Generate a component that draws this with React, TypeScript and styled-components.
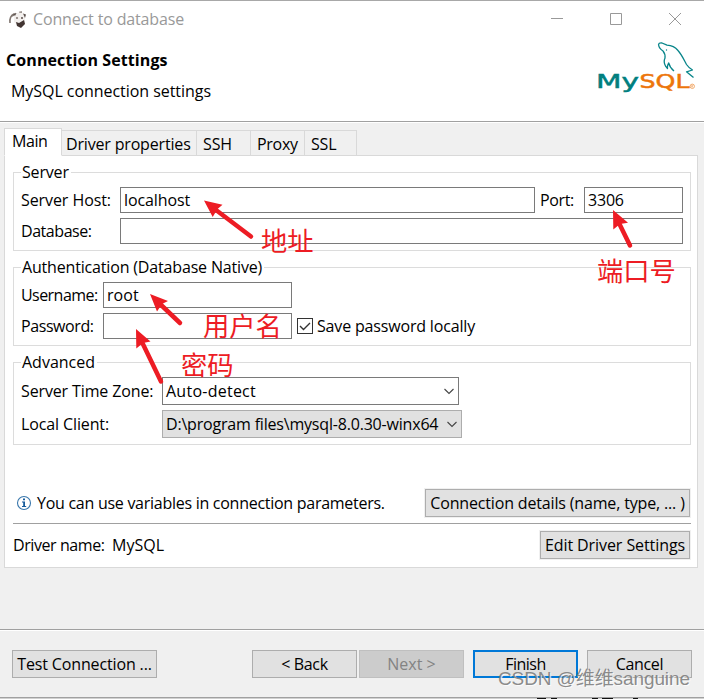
import React from "react";
import styled, { createGlobalStyle, css } from "styled-components";

const GlobalStyle = createGlobalStyle`
  * { box-sizing: border-box; }
  body {
    margin: 0;
    overflow: hidden;
    background: #f0f0f0;
    color: #000;
    font: 16px/22px "Open Sans", "Noto Sans", sans-serif;
  }
`;

const Dialog = styled.div`
  position: relative;
  display: flex;
  flex-direction: column;
  width: 704px;
  height: 699px;
  overflow: hidden;
  background: #f0f0f0;
  border-top: 1px solid #a8a8a8;
`;

const Text = styled.span<{ $ls?: number; $w?: number }>`
  flex: none;
  white-space: pre;
  letter-spacing: ${(p) => p.$ls ?? -0.17}px;
  ${(p) => p.$w && css`width: ${p.$w}px;`}
`;

/* Header */
const Header = styled.header`
  height: 122px;
  flex: none;
  background: #fff;
  border-bottom: 1px solid #fff;
  box-shadow: inset 0 -1px #a0a0a0;
`;

const TitleBar = styled.div`
  display: flex;
  align-items: center;
  height: 36px;
  padding: 0 22px 0 8px;
  color: #999;
`;

const TitleText = styled(Text)`
  margin-left: 6px;
  flex: 1;
`;

const WindowControls = styled.div`
  display: flex;
  gap: 45px;
`;

const HeaderBody = styled.div`
  display: flex;
  justify-content: space-between;
  align-items: flex-start;
  padding: 2px 6px 0;
`;

const Headings = styled.div`
  display: flex;
  flex-direction: column;
  gap: 9px;
  padding-top: 10px;
`;

const Heading = styled(Text)`
  font-weight: 700;
`;

const SubHeading = styled(Text)`
  padding-left: 5px;
`;

/* Tabs */
const TabStrip = styled.nav`
  display: flex;
  align-items: flex-end;
  height: 28px;
  margin: 5px 0 -1px 4px;
  position: relative;
`;

const Tab = styled.div<{ $w: number; $active?: boolean }>`
  width: ${(p) => p.$w}px;
  height: 26px;
  padding: 2px 0 0 6px;
  border: 1px solid #d9d9d9;
  border-left: 0;
  ${(p) =>
    p.$active &&
    css`
      height: 28px;
      padding: 1px 0 0 7px;
      background: #fff;
      border-left: 1px solid #d9d9d9;
      border-bottom-color: #fff;
    `}
`;

const WideTab = styled(Tab)`
  padding-left: 4px;
`;

const Panel = styled.main`
  width: 694px;
  height: 413px;
  flex: none;
  margin-left: 4px;
  padding: 7px 6px 0 8px;
  background: #fff;
  border: 1px solid #d9d9d9;
`;

const Group = styled.fieldset<{ $h: number }>`
  height: ${(p) => p.$h}px;
  margin: 0 0 7px;
  padding: 5px 7px 0 7px;
  border: 1px solid #dcdcdc;
  min-width: 0;
`;

const Legend = styled.legend`
  height: 19px;
  padding: 0 2px 0 1px;
  line-height: 19px;
`;

const Row = styled.div`
  display: flex;
  align-items: center;
  margin-bottom: 5px;
`;

const Field = styled.div<{ $w: number }>`
  width: ${(p) => p.$w}px;
  height: 26px;
  padding-left: 3px;
  line-height: 25px;
  background: #fff;
  border: 1px solid #7a7a7a;
`;

const PortLabel = styled(Text)`
  padding-left: 5px;
`;

const CheckBox = styled.div`
  display: flex;
  width: 16px;
  height: 16px;
  margin: 0 4px 0 5px;
  background: #fff;
  border: 1px solid #333;
`;

const Combo = styled.div<{ $w: number; $flat?: boolean }>`
  display: flex;
  align-items: center;
  justify-content: space-between;
  width: ${(p) => p.$w}px;
  height: 28px;
  padding: 0 3px 0 3px;
  background: ${(p) => (p.$flat ? "#e1e1e1" : "#fff")};
  border: 1px solid ${(p) => (p.$flat ? "#adadad" : "#7a7a7a")};
`;

const InfoRow = styled.div`
  display: flex;
  align-items: center;
  height: 28px;
  margin: 44px 1px 6px 3px;
`;

const InfoText = styled(Text)`
  flex: 1;
  margin-left: 5px;
`;

const Divider = styled.div`
  height: 1px;
  background: #a0a0a0;
`;

const DriverRow = styled.div`
  display: flex;
  align-items: center;
  margin: 7px 1px 0 0;
`;

const Spacer = styled.div`
  flex: 1;
`;

const Button = styled.div<{ $w: number; $kind?: "primary" | "disabled" }>`
  display: flex;
  align-items: center;
  justify-content: center;
  flex: none;
  width: ${(p) => p.$w}px;
  height: 28px;
  background: #e1e1e1;
  border: 1px solid #adadad;
  box-shadow: 0 0 0 1px #f0f0f0;
  ${(p) => p.$kind === "primary" && css`border: 2px solid #0078d7;`}
  ${(p) =>
    p.$kind === "disabled" &&
    css`
      color: #838383;
      background: #ccc;
      border-color: #bfbfbf;
    `}
`;

/* Footer */
const Footer = styled.footer`
  display: flex;
  align-items: flex-start;
  height: 69px;
  margin-top: 61px;
  padding: 20px 12px 0;
  border-top: 1px solid #a0a0a0;
  border-bottom: 1px solid #a0a0a0;
  box-shadow: inset 0 1px #fff;
`;

const NavButtons = styled.div`
  display: flex;
  gap: 2px;
`;

const FinalButtons = styled.div`
  display: flex;
  gap: 9px;
  margin-left: 9px;
`;

const Backdrop = styled.svg`
  display: block;
  flex: none;
  background: #d0d0d0;
`;

/* Annotations lying over the dialog */
const Arrows = styled.svg`
  position: absolute;
  left: 0;
  top: -1px;
`;

const Note = styled.div<{ $x: number; $y: number }>`
  position: absolute;
  left: ${(p) => p.$x}px;
  top: ${(p) => p.$y}px;
  color: #ed1c24;
  font: 26.3px/30px "Noto Sans CJK SC", sans-serif;
  white-space: nowrap;
`;

const Watermark = styled.div`
  position: absolute;
  left: 498px;
  top: 665px;
  color: rgba(125, 125, 125, 0.9);
  font: 19px/26px "Liberation Sans", "Noto Sans CJK SC", sans-serif;
  letter-spacing: -0.1px;
  text-shadow: 1px 1px 0 rgba(255, 255, 255, 0.75);
  white-space: nowrap;
`;

const BeaverIcon = () => (
  <svg width="19" height="20" viewBox="0 0 19 20" fill="none">
    <path d="M2 14C1.500 10 3 6.500 6 5M4 7L8 4.500M11 3.500L14 3" stroke="#807670" strokeWidth="1.600" />
    <path d="M6 5Q11 2 17 5L17 15L12 18L6 13Z" fill="#f3f0ee" />
    <path d="M5 5L8.500 4L7 7ZM15 4.500L18 5.500L17 9Z" fill="#5d524e" />
    <circle cx="9" cy="9" r="1.100" fill="#887d78" />
    <circle cx="14" cy="9" r="1" fill="#594c48" />
    <path d="M8 13L11 14L16 11L17 15L13 19L9 17Z" fill="#423532" />
  </svg>
);

const MySqlLogo = () => (
  <svg width="102" height="58" viewBox="596 39 102 58" fill="none">
    <g fontFamily="DejaVu Sans" fontSize="19.500" strokeWidth=".5">
      <text x="596" y="88" fill="#007f7f" stroke="#007f7f" textLength="43" lengthAdjust="spacingAndGlyphs">My</text>
      <text x="639.500" y="88" fill="#ed750b" stroke="#ed750b" textLength="50" lengthAdjust="spacingAndGlyphs">SQL</text>
    </g>
    <circle cx="692.300" cy="86.300" r="2.200" stroke="#ef9a50" strokeWidth=".8" />
    <path d="M691.700 87.500V85.200H692.900V86.300H691.700L693 87.500" stroke="#ef9a50" strokeWidth=".5" />
    <path
      d="M658.500 44.500Q659 42.600 662 43L667 45.200Q674 45.500 678 50.500C682 55 684 60 686.500 64.500Q688.500 67.500 692.500 70L686.500 71.800L693.500 77.500M658.500 44.500Q659 48.500 663 51Q665.500 54 665 58Q663.200 62 665.500 66L667.500 68.500Q667.200 65 668.700 63Q669.500 67 674 71"
      stroke="#08858a"
      strokeWidth="1.300"
      strokeLinejoin="round"
    />
    <circle cx="666.500" cy="50" r=".7" fill="#08858a" />
  </svg>
);

const Chevron = () => (
  <svg width="12" height="8" viewBox="0 0 12 8" fill="none">
    <path d="M1.500 2L6 6.500L10.500 2" stroke="#444" strokeWidth="1.100" />
  </svg>
);

const InfoIcon = () => (
  <svg width="16" height="16" viewBox="0 0 16 16" fill="none">
    <circle cx="8" cy="8" r="6.500" stroke="#3977ac" strokeWidth="1.100" />
    <path d="M7 3.500H9V5.300H7ZM6 6.500H9V11H10.200V12H6V11H7.200V7.500H6Z" fill="#165b9b" />
  </svg>
);

export default function App() {
  return (
    <>
      <GlobalStyle />
      <Dialog>
        <Header>
          <TitleBar>
            <BeaverIcon />
            <TitleText $ls={-0.15}>Connect to database</TitleText>
            <WindowControls>
              <svg width="14" height="14" viewBox="0 0 14 14"><path d="M1 6.500H13" stroke="#999" /></svg>
              <svg width="14" height="14" viewBox="0 0 14 14" fill="none"><path d="M1.500 1.500H12.500V12.500H1.500Z" stroke="#999" /></svg>
              <svg width="14" height="14" viewBox="0 0 14 14"><path d="M1 1L13 13M13 1L1 13" stroke="#999" /></svg>
            </WindowControls>
          </TitleBar>
          <HeaderBody>
            <Headings>
              <Heading $ls={0.1}>Connection Settings</Heading>
              <SubHeading $ls={-0.05}>MySQL connection settings</SubHeading>
            </Headings>
            <MySqlLogo />
          </HeaderBody>
        </Header>

        <TabStrip>
          <Tab $w={58} $active><Text $ls={-0.4}>Main</Text></Tab>
          <WideTab $w={135}><Text $ls={-0.17}>Driver properties</Text></WideTab>
          <Tab $w={54}><Text $ls={-0.1}>SSH</Text></Tab>
          <Tab $w={54}><Text $ls={-0.3}>Proxy</Text></Tab>
          <Tab $w={52}><Text $ls={-0.2}>SSL</Text></Tab>
        </TabStrip>

        <Panel>
          <Group $h={88}>
            <Legend><Text>Server</Text></Legend>
            <Row>
              <Text $w={99} $ls={-0.08}>Server Host:</Text>
              <Field $w={415}><Text $ls={-0.1}>localhost</Text></Field>
              <PortLabel $w={49} $ls={-0.35}>Port:</PortLabel>
              <Field $w={99}><Text $ls={-0.2}>3306</Text></Field>
            </Row>
            <Row>
              <Text $w={99} $ls={-0.45}>Database:</Text>
              <Field $w={563} />
            </Row>
          </Group>

          <Group $h={88}>
            <Legend><Text>Authentication (Database Native)</Text></Legend>
            <Row>
              <Text $w={82} $ls={-0.55}>Username:</Text>
              <Field $w={189}><Text $ls={0.05}>root</Text></Field>
            </Row>
            <Row>
              <Text $w={82} $ls={-0.42}>Password:</Text>
              <Field $w={189} />
              <CheckBox>
                <svg width="14" height="14" viewBox="0 0 14 14" fill="none">
                  <path d="M2 7L5.500 10.500L12 4" stroke="#333" strokeWidth="1.400" />
                </svg>
              </CheckBox>
              <Text>Save password locally</Text>
            </Row>
          </Group>

          <Group $h={92}>
            <Legend><Text $ls={0}>Advanced</Text></Legend>
            <Row>
              <Text $w={141} $ls={-0.13}>Server Time Zone:</Text>
              <Combo $w={297}><Text $ls={0.25}>Auto-detect</Text><Chevron /></Combo>
            </Row>
            <Row>
              <Text $w={141} $ls={-0.12}>Local Client:</Text>
              <Combo $w={300} $flat>
                <Text $ls={-0.19}>D:\program files\mysql-8.0.30-winx64</Text>
                <Chevron />
              </Combo>
            </Row>
          </Group>

          <InfoRow>
            <InfoIcon />
            <InfoText $ls={-0.27}>You can use variables in connection parameters.</InfoText>
            <Button $w={265}><Text $ls={-0.16}>Connection details (name, type, ... )</Text></Button>
          </InfoRow>
          <Divider />
          <DriverRow>
            <Text $w={99} $ls={-0.42}>Driver name:</Text>
            <Text $ls={0.05}>MySQL</Text>
            <Spacer />
            <Button $w={150}><Text $ls={-0.08}>Edit Driver Settings</Text></Button>
          </DriverRow>
        </Panel>

        <Footer>
          <Button $w={145}><Text $ls={-0.14}>Test Connection ...</Text></Button>
          <Spacer />
          <NavButtons>
            <Button $w={105}><Text $ls={-0.35}>{"< Back"}</Text></Button>
            <Button $w={105} $kind="disabled"><Text $ls={0}>{"Next >"}</Text></Button>
          </NavButtons>
          <FinalButtons>
            <Button $w={105} $kind="primary"><Text $ls={-0.5}>Finish</Text></Button>
            <Button $w={105}><Text $ls={-0.35}>Cancel</Text></Button>
          </FinalButtons>
        </Footer>
        <Backdrop width="704" height="1">
          <path d="M537 .5H546M551 .5H557M592 .5H598M602 .5H613M633 .5H638" stroke="#111" />
        </Backdrop>

        <Arrows width="704" height="699" fill="#ed1c24" stroke="#ed1c24" strokeLinecap="round">
          <path d="M204 200.500L222.500 204.700L217.500 209L212.700 217Z" stroke="none" />
          <path d="M214 208.500L251 236.500" strokeWidth="4.500" />
          <path d="M613 210L628 222.700L620 224L613.300 229.500Z" stroke="none" />
          <path d="M618 221L630 245.500" strokeWidth="4.500" />
          <path d="M150 294L168 301L162 304L157 311.500Z" stroke="none" />
          <path d="M159 303L180 323" strokeWidth="4.500" />
          <path d="M136 329L150.500 341.500L143 343L136.300 348.500Z" stroke="none" />
          <path d="M141 340L161 381.500" strokeWidth="4.500" />
        </Arrows>
        <Note $x={261} $y={224}>地址</Note>
        <Note $x={597} $y={254}>端口号</Note>
        <Note $x={203} $y={309}>用户名</Note>
        <Note $x={181} $y={348}>密码</Note>
        <Watermark>CSDN @维维sanguine</Watermark>
      </Dialog>
    </>
  );
}
